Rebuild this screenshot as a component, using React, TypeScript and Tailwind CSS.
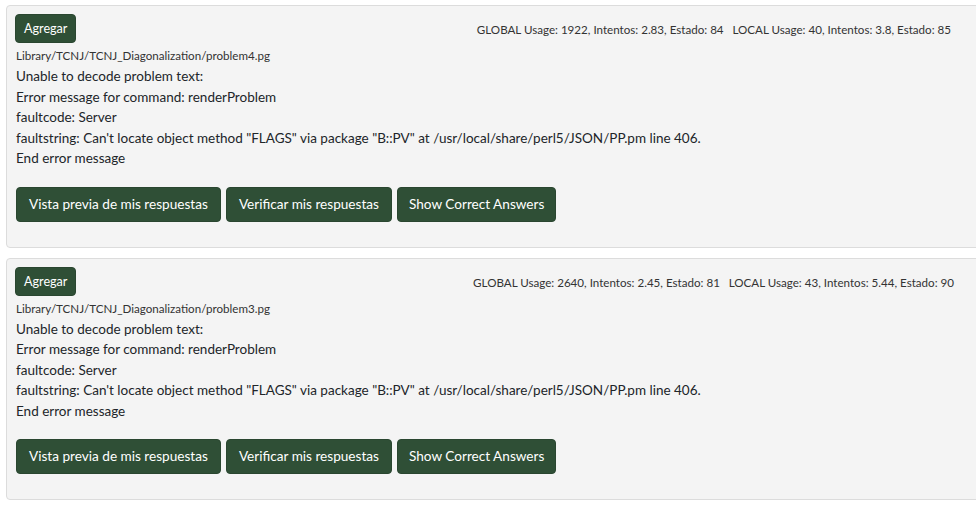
const problems = [
  {
    path: 'Library/TCNJ/TCNJ_Diagonalization/problem4.pg',
    stats: 'GLOBAL Usage: 1922, Intentos: 2.83, Estado: 84\u00a0\u00a0 LOCAL Usage: 40, Intentos: 3.8, Estado: 85',
    statsClass: 'mr-0',
  },
  {
    path: 'Library/TCNJ/TCNJ_Diagonalization/problem3.pg',
    stats: 'GLOBAL Usage: 2640, Intentos: 2.45, Estado: 81\u00a0\u00a0 LOCAL Usage: 43, Intentos: 5.44, Estado: 90',
    statsClass: 'mr-[-3px]',
  },
];

function ProblemCard({ path, stats, statsClass }: { path: string; stats: string; statsClass: string }) {
  return (
    <div className="w-[985px] bg-[#f4f4f4] border border-[#dcdcdc] rounded-[4px] pl-[9px] pr-[39px] pt-[8px] pb-[25px]">
      <div className="flex items-start justify-between">
        <button className="ml-[-1px] bg-[#2f4f36] text-white text-[12.6px] leading-[17px] px-[8px] py-[5px] rounded-[4px] border border-[#2a4630]">
          Agregar
        </button>
        <div className={`text-[11.6px] text-[#333] mt-[7px] ${statsClass}`}>{stats}</div>
      </div>
      <div className="text-[11.6px] text-[#333] mt-[5px] leading-[16px]">{path}</div>
      <div className="text-[13.5px] text-[#212529] leading-[20.5px] mt-[2px]">
        <div>Unable to decode problem text:</div>
        <div>Error message for command: renderProblem</div>
        <div>faultcode: Server</div>
        <div>faultstring: Can't locate object method "FLAGS" via package "B::PV" at /usr/local/share/perl5/JSON/PP.pm line 406.</div>
        <div>End error message</div>
      </div>
      <div className="flex gap-[5px] mt-[18px]">
        <button className="bg-[#2f4f36] text-white text-[13.6px] h-[35px] px-[12px] rounded-[4px] border border-[#2a4630]">Vista previa de mis respuestas</button>
        <button className="bg-[#2f4f36] text-white text-[13.6px] h-[35px] px-[12px] rounded-[4px] border border-[#2a4630]">Verificar mis respuestas</button>
        <button className="bg-[#2f4f36] text-white text-[13.6px] h-[35px] px-[11px] rounded-[4px] border border-[#2a4630]">Show Correct Answers</button>
      </div>
    </div>
  );
}

export default function App() {
  return (
    <div className="w-[976px] h-[508px] overflow-hidden bg-white pl-[6px] pt-[5px] flex flex-col gap-[10px] font-['Lato','Liberation_Sans',sans-serif]">
      {problems.map((p) => (
        <ProblemCard key={p.path} path={p.path} stats={p.stats} statsClass={p.statsClass} />
      ))}
    </div>
  );
}
